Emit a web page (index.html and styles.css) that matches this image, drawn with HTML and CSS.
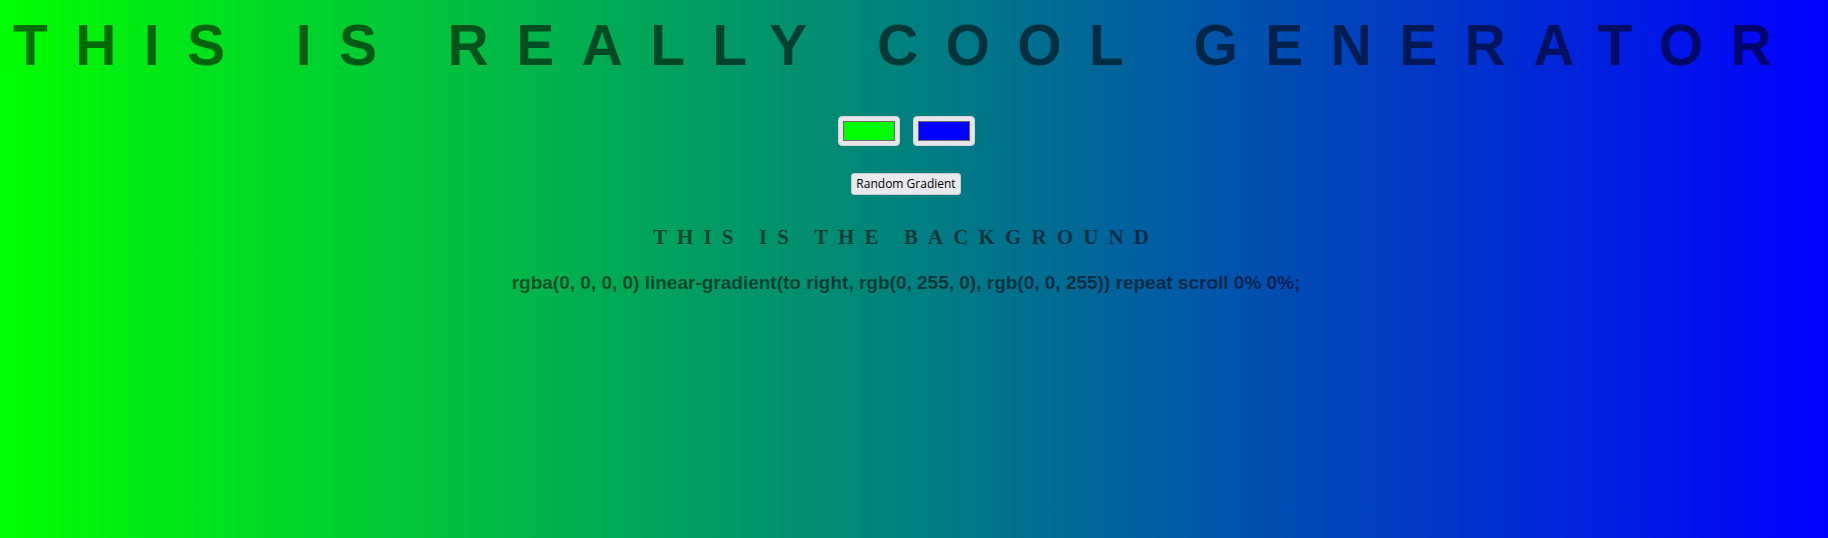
FILE: index.html
```html
<!DOCTYPE html>
<html lang="en">
<head>
<meta charset="utf-8">
<title>Gradient Generator</title>
<link rel="stylesheet" href="styles.css">
</head>
<body>
<main class="page">
  <h1 class="title">This is really cool generator</h1>
  <div class="pickers">
    <input class="picker" type="color" value="#00ff00">
    <input class="picker" type="color" value="#0000ff">
  </div>
  <div class="actions">
    <button class="random-btn" type="button">Random Gradient</button>
  </div>
  <h3 class="subtitle">This is the background</h3>
  <p class="css-value">rgba(0, 0, 0, 0) linear-gradient(to right, rgb(0, 255, 0), rgb(0, 0, 255)) repeat scroll 0% 0%;</p>
</main>
</body>
</html>
```

FILE: styles.css
```css
html {
  min-height: 100%;
}

body {
  margin: 0;
  min-height: 538px;
  background: linear-gradient(to right, rgb(0, 255, 0), rgb(0, 0, 255));
  color: rgba(0, 0, 0, 0.56);
  font-family: "Liberation Sans", Arial, sans-serif;
}

.page {
  padding: 8px 24px 8px 8px;
  text-align: center;
}

.title {
  margin: 0;
  padding-top: 5px;
  font-size: 57px;
  line-height: 64px;
  font-weight: bold;
  letter-spacing: 27.4px;
  text-transform: uppercase;
}

.pickers {
  display: flex;
  justify-content: center;
  gap: 13px;
  margin-top: 39px;
}

.picker {
  -webkit-appearance: none;
  appearance: none;
  width: 62px;
  height: 30px;
  padding: 4px;
  margin: 0;
  border: 1px solid #d4d4d8;
  border-radius: 4px;
  background: #e6e6ea;
  cursor: pointer;
}

.picker::-webkit-color-swatch-wrapper {
  padding: 0;
}

.picker::-webkit-color-swatch {
  border: 1px solid #6a6a6a;
  border-radius: 0;
}

.actions {
  display: flex;
  justify-content: center;
  margin-top: 27px;
}

.random-btn {
  width: 110px;
  height: 22px;
  padding: 0;
  border: 1px solid #c9c9cf;
  border-radius: 3px;
  background: #e9e9ed;
  color: #000;
  font-family: "Open Sans", "DejaVu Sans", sans-serif;
  font-size: 12px;
  line-height: 20px;
}

.subtitle {
  margin: 30px 0 0;
  font-family: "Liberation Serif", "Times New Roman", serif;
  font-size: 21px;
  line-height: 24px;
  font-weight: bold;
  letter-spacing: 10.1px;
  text-transform: uppercase;
}

.css-value {
  margin: 23px 0 0;
  font-size: 19px;
  line-height: 22px;
  font-weight: bold;
}
```
